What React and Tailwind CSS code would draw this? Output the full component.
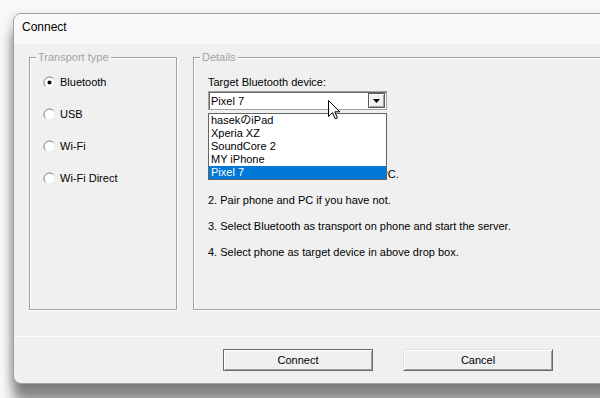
import React from "react";

// ----------------------
// Small drawing helpers
// ----------------------
function Radio({ checked }) {
  return (
    <svg width="13" height="13" viewBox="0 0 13 13" className="shrink-0">
      <circle cx="6.5" cy="6.5" r="5.5" fill="#fff" />
      <path d="M2.6 10.4 A5.5 5.5 0 0 1 10.4 2.6" fill="none" stroke="#7a7a7a" strokeWidth="1" />
      <path d="M10.4 2.6 A5.5 5.5 0 0 1 2.6 10.4" fill="none" stroke="#e6e6e6" strokeWidth="1" />
      {checked && <circle cx="6.5" cy="6.5" r="2" fill="#000" />}
    </svg>
  );
}

// mouse pointer hovering over the combo box
function Cursor() {
  return (
    <svg width="13" height="20" viewBox="0 0 13 20" className="absolute left-[134px] top-[42px]">
      <path
        d="M0.5 0.5 L0.5 16.5 L4.5 12.7 L7.2 18.8 L9.4 17.9 L6.8 11.8 L11.8 11.8 Z"
        fill="#fff"
        stroke="#000"
        strokeWidth="1"
      />
    </svg>
  );
}

function Group({ label, className = "", children }) {
  return (
    <div
      className={`relative h-[253px] border border-[#a0a0a0] shadow-[inset_1px_1px_0_#fff,1px_1px_0_#fff] ${className}`}
    >
      <span className="absolute left-[6px] top-[-7px] bg-[#f0f0f0] px-[2px] text-[11px] leading-[13px] text-[#a3a3a3]">
        {label}
      </span>
      {children}
    </div>
  );
}

const transports = [
  { name: "Bluetooth", checked: true },
  { name: "USB" },
  { name: "Wi-Fi" },
  { name: "Wi-Fi Direct" },
];

const devices = ["hasekのiPad", "Xperia XZ", "SoundCore 2", "MY iPhone", "Pixel 7"];

const steps = [
  "1. Turn on Bluetooth on phone and PC.",
  "2. Pair phone and PC if you have not.",
  "3. Select Bluetooth as transport on phone and start the server.",
  "4. Select phone as target device in above drop box.",
];

export default function App() {
  return (
    <div
      className="relative h-[398px] w-[600px] overflow-hidden bg-[#f8f8f8] text-black"
      style={{ fontFamily: '"Liberation Sans", "Noto Sans CJK JP", sans-serif' }}
    >
      {/* Dialog window */}
      <div className="ml-[13px] mt-[13px] w-[640px] overflow-hidden rounded-[8px] border border-[#a2a2a2] bg-[#f0f0f0] shadow-[-2px_2px_10px_rgba(0,0,0,0.15),0_18px_12px_rgba(0,0,0,0.45)]">
        {/* Title bar */}
        <div className="h-[30px] bg-[#f9f9f9] pl-[8px] pt-[6px] text-[12px] leading-[14px]">Connect</div>

        {/* Body */}
        <div className="relative flex gap-[16px] pl-[15px] pr-[20px] pt-[13px]">
          <Group label="Transport type" className="w-[148px] shrink-0">
            <div className="flex flex-col gap-[19px] pl-[13px] pt-[18px]">
              {transports.map((t) => (
                <div key={t.name} className="flex h-[13px] items-center gap-[4px] text-[11px]">
                  <Radio checked={t.checked} />
                  <span>{t.name}</span>
                </div>
              ))}
            </div>
          </Group>

          <Group label="Details" className="flex-1">
            <div className="pl-[14px] pt-[18px] text-[11px] leading-[13px]">
              <div>Target Bluetooth device:</div>
              {/* Combo box */}
              <div className="mt-[2px] flex h-[19px] w-[179px] border border-[#a0a0a0] bg-white shadow-[inset_1px_1px_0_#696969]">
                <div className="flex flex-1 items-center pl-[2px] pt-[1px]">Pixel 7</div>
                <div className="m-[1px] flex w-[17px] items-center justify-center border border-[#5a5a5a] bg-[#f0f0f0] shadow-[inset_1px_1px_0_#fff,inset_-1px_-1px_0_#a0a0a0]">
                  <svg width="7" height="4" viewBox="0 0 7 4">
                    <path d="M0 0 H7 L3.5 4 Z" fill="#000" />
                  </svg>
                </div>
              </div>
              <div className="mt-[58px] flex flex-col gap-[13px]">
                {steps.map((s) => (
                  <div key={s} className="h-[13px] whitespace-nowrap">
                    {s}
                  </div>
                ))}
              </div>
            </div>

            {/* Open drop-down list */}
            <div className="absolute left-[14px] top-[55px] w-[179px] border border-[#646464] bg-white text-[11px] leading-[13px]">
              {devices.map((d, i) => (
                <div
                  key={d}
                  className={`h-[13px] pl-[2px] ${i === devices.length - 1 ? "bg-[#0078d7] text-white" : ""}`}
                >
                  {d}
                </div>
              ))}
            </div>
            <Cursor />
          </Group>
        </div>

        {/* Footer */}
        <div className="mt-[26px] flex h-[47px] gap-[30px] border-t border-white pl-[209px] pt-[12px] text-[11px]">
          <button className="h-[22px] w-[150px] border border-[#6a6a6a] bg-[#f0f0f0] shadow-[inset_1px_1px_0_#fff,inset_-1px_-1px_0_#a0a0a0]">
            Connect
          </button>
          <button className="h-[22px] w-[150px] border border-b-[#696969] border-l-[#e3e3e3] border-r-[#696969] border-t-[#e3e3e3] bg-[#f0f0f0] shadow-[inset_1px_1px_0_#fff,inset_-1px_-1px_0_#a0a0a0]">
            Cancel
          </button>
        </div>
      </div>
    </div>
  );
}
